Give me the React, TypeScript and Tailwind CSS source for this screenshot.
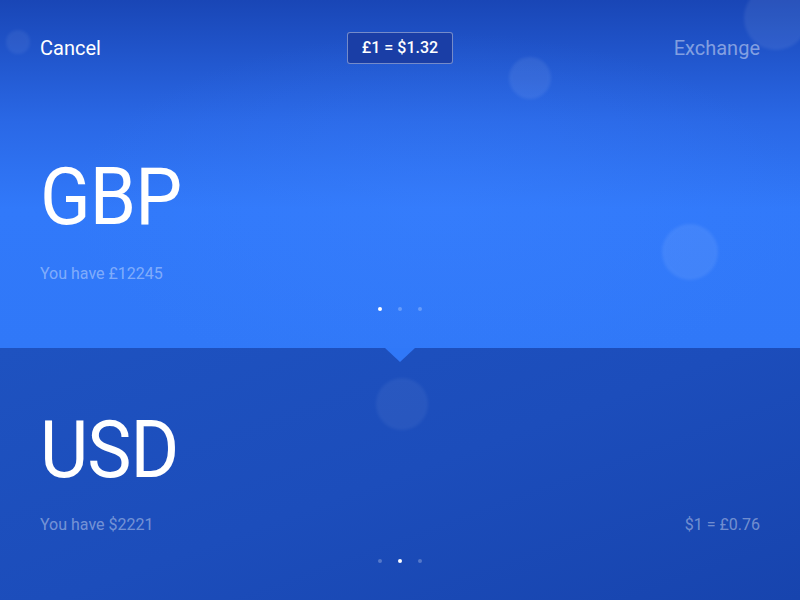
import React from "react";

const Bokeh = ({ x, y, r, o }: { x: number; y: number; r: number; o: number }) => (
  <div
    className="absolute rounded-full bg-white pointer-events-none"
    style={{ left: x - r, top: y - r, width: r * 2, height: r * 2, opacity: o, filter: "blur(1.5px)" }}
  />
);

const Dots = ({ active }: { active: number }) => (
  <div className="flex justify-center gap-4">
    {[0, 1, 2].map((i) => (
      <div
        key={i}
        className={`w-1 h-1 rounded-full ${i === active ? "bg-white" : "bg-white/25"}`}
      />
    ))}
  </div>
);

export default function App() {
  return (
    <div
      className="relative w-[800px] h-[600px] overflow-hidden text-white flex flex-col"
      style={{ fontFamily: "Roboto, 'Liberation Sans', sans-serif" }}
    >
      <div className="relative h-[348px] flex flex-col bg-[linear-gradient(180deg,#1946b6_0%,#2a68e6_35%,#3179fa_60%,#3078f8_100%)]">
        <div className="absolute inset-0 bg-[radial-gradient(ellipse_at_55%_60%,rgba(60,130,255,0.35),transparent_60%)]" />
        <Bokeh x={18} y={42} r={12} o={0.06} />
        <Bokeh x={530} y={78} r={21} o={0.07} />
        <Bokeh x={776} y={18} r={32} o={0.07} />
        <Bokeh x={690} y={252} r={28} o={0.08} />
        <div className="relative flex items-center justify-between px-10 pt-[32px]">
          <span className="text-[20px] w-[120px]">Cancel</span>
          <div className="h-8 w-[106px] flex items-center justify-center rounded-[3px] border border-white/40 bg-[#1a3ea6] text-[16px] font-medium">
            £1 = $1.32
          </div>
          <span className="text-[20px] w-[120px] text-right text-white/45">Exchange</span>
        </div>
        <div className="relative px-10 pt-[93px] flex flex-col items-start">
          <div className="text-[80px] font-normal leading-none tracking-[-1px] scale-x-[0.93] origin-left">GBP</div>
          <div className="mt-[25px] text-[16px] text-white/40">You have £12245</div>
        </div>
        <div className="relative mt-[21px]">
          <Dots active={0} />
        </div>
      </div>
      <div className="relative flex-1 flex flex-col bg-[linear-gradient(160deg,#1e52c0_0%,#1c4dbb_50%,#1744ae_100%)]">
        <div className="absolute left-[385px] top-0 w-0 h-0 border-l-[15px] border-r-[15px] border-t-[14px] border-l-transparent border-r-transparent border-t-[#3078f8]" />
        <Bokeh x={402} y={56} r={26} o={0.05} />
        <div className="relative px-10 pt-[62px] flex flex-col">
          <div className="self-start text-[80px] font-normal leading-none tracking-[-1px] scale-x-[0.93] origin-left">USD</div>
          <div className="mt-[23px] flex justify-between text-[16px] text-white/40">
            <span>You have $2221</span>
            <span>$1 = £0.76</span>
          </div>
        </div>
        <div className="relative mt-[22px]">
          <Dots active={1} />
        </div>
      </div>
    </div>
  );
}
